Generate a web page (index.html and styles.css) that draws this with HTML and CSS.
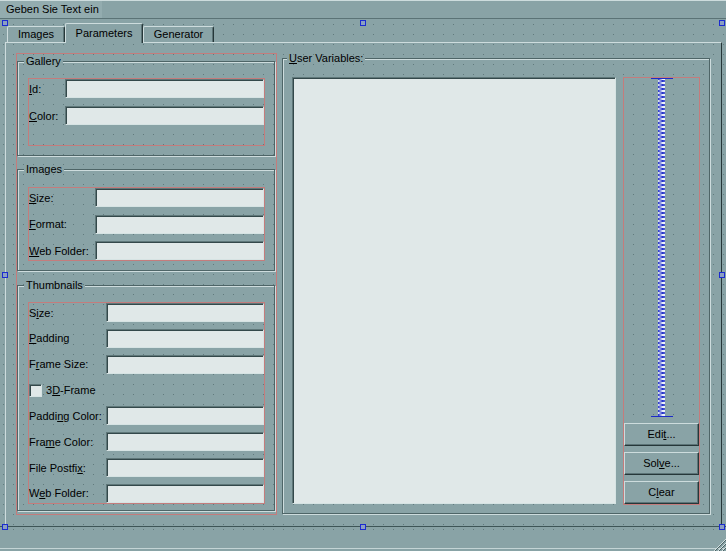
FILE: index.html
```html
<!DOCTYPE html>
<html>
<head>
<meta charset="utf-8">
<title>Form</title>
<link rel="stylesheet" href="styles.css">
</head>
<body>
<div class="topbar"><div class="topbar-label">Geben Sie Text ein</div></div>
<div class="form dotted">
  <div class="tabbar">
    <div class="tab t-images">Images</div>
    <div class="tab t-params sel">Parameters</div>
    <div class="tab t-gen">Generator</div>
  </div>
  <div class="pane">
    <div class="leftcol">
      <div class="group g-gallery">
        <div class="gtitle">Gallery</div>
        <div class="lay lay-gallery">
          <div class="row"><span class="lbl w36"><u>I</u>d:</span><div class="field"></div></div>
          <div class="row"><span class="lbl w36"><u>C</u>olor:</span><div class="field"></div></div>
        </div>
      </div>
      <div class="group g-images">
        <div class="gtitle">Images</div>
        <div class="lay lay-images">
          <div class="row"><span class="lbl w66"><u>S</u>ize:</span><div class="field"></div></div>
          <div class="row"><span class="lbl w66"><u>F</u>ormat:</span><div class="field"></div></div>
          <div class="row"><span class="lbl w66"><u>W</u>eb Folder:</span><div class="field"></div></div>
        </div>
      </div>
      <div class="group g-thumbs">
        <div class="gtitle">Thumbnails</div>
        <div class="lay lay-thumbs">
          <div class="row"><span class="lbl w77">S<u>i</u>ze:</span><div class="field"></div></div>
          <div class="row"><span class="lbl w77"><u>P</u>adding</span><div class="field"></div></div>
          <div class="row"><span class="lbl w77">F<u>r</u>ame Size:</span><div class="field"></div></div>
          <div class="row"><div class="chk"></div><span class="chklbl">3<u>D</u>-Frame</span></div>
          <div class="row"><span class="lbl w77">Paddi<u>n</u>g Color:</span><div class="field"></div></div>
          <div class="row"><span class="lbl w77">Fra<u>m</u>e Color:</span><div class="field"></div></div>
          <div class="row"><span class="lbl w77">File Postfi<u>x</u>:</span><div class="field"></div></div>
          <div class="row"><span class="lbl w77">W<u>e</u>b Folder:</span><div class="field"></div></div>
        </div>
      </div>
    </div>
    <div class="group uv">
      <div class="gtitle uvtitle"><u>U</u>ser Variables:</div>
      <div class="uvrow">
        <div class="listbox"></div>
        <div class="btncol">
          <div class="spacer">
            <div class="sp-cap"></div>
            <svg class="spring" xmlns="http://www.w3.org/2000/svg">
              <defs>
                <pattern id="coil" width="7" height="4" patternUnits="userSpaceOnUse">
                  <rect width="7" height="4" fill="#eef2fa"/>
                  <path d="M0 0.5 L7 2 L0 3.5" fill="none" stroke="#1c2bc8" stroke-width="1"/>
                </pattern>
              </defs>
              <rect width="100%" height="100%" fill="url(#coil)"/>
            </svg>
            <div class="sp-cap"></div>
          </div>
          <div class="btn">Edi<u>t</u>...</div>
          <div class="btn">Sol<u>v</u>e...</div>
          <div class="btn">C<u>l</u>ear</div>
        </div>
      </div>
    </div>
  </div>
</div>
<div class="bottombar"><div class="bdots"></div></div>

<div class="handle h-tl"></div>
<div class="handle h-tc"></div>
<div class="handle h-tr"></div>
<div class="handle h-ml"></div>
<div class="handle h-mr"></div>
<div class="handle h-bl"></div>
<div class="handle h-bc"></div>
<div class="handle h-br"></div>

<svg class="grip" width="13" height="13" viewBox="0 0 13 13" xmlns="http://www.w3.org/2000/svg">
  <g stroke-width="1">
    <line x1="1" y1="13" x2="13" y2="1" stroke="#d3e1e2"/>
    <line x1="2" y1="13" x2="13" y2="2" stroke="#4a6163"/>
    <line x1="5" y1="13" x2="13" y2="5" stroke="#d3e1e2"/>
    <line x1="6" y1="13" x2="13" y2="6" stroke="#4a6163"/>
    <line x1="9" y1="13" x2="13" y2="9" stroke="#d3e1e2"/>
    <line x1="10" y1="13" x2="13" y2="10" stroke="#4a6163"/>
  </g>
</svg>
</body>
</html>
```

FILE: styles.css
```css
:root {
  --bg: #89a3a6;
  --dot: #617a7d;
  --dark: #4e6567;
  --darker: #263739;
  --mid: #5c7477;
  --light: #cddcdd;
  --field: #e0e8e8;
  --red: #c47c7c;
}

html, body {
  margin: 0;
  padding: 0;
}

body {
  width: 726px;
  height: 551px;
  overflow: hidden;
  position: relative;
  background: var(--bg);
  font-family: "Liberation Sans", Arial, sans-serif;
  font-size: 11px;
  color: #000;
}

u {
  text-decoration: underline;
  text-underline-offset: 1px;
}

.dotted,
.gtitle {
  background-color: var(--bg);
  background-image: conic-gradient(at 1px 1px, transparent 75%, var(--dot) 0);
  background-size: 10px 10px;
  background-position: 3px 4px;
  background-attachment: fixed;
}

/* top strip */
.topbar {
  height: 17px;
  border-top: 1px solid var(--light);
  border-bottom: 1px solid #5b7376;
  display: flex;
}

.topbar-label {
  width: 90px;
  padding: 0 6px;
  height: 17px;
  line-height: 17px;
  background: #93acaf;
  white-space: nowrap;
}

/* form */
.form {
  padding: 4px 4px 0 5px;
}

.tabbar {
  height: 19px;
  padding-left: 2px;
  display: flex;
  align-items: flex-end;
}

.tab {
  box-sizing: border-box;
  height: 16px;
  line-height: 15px;
  text-align: center;
  background: var(--bg);
  border-top: 1px solid var(--light);
  border-left: 1px solid var(--light);
  border-right: 1px solid var(--darker);
  box-shadow: inset -1px 0 0 var(--mid);
  border-radius: 2px 2px 0 0;
  white-space: nowrap;
}

.t-images { width: 58px; }
.t-params { width: 78px; }
.t-gen { width: 71px; }

.tab.sel {
  height: 20px;
  line-height: 19px;
  margin-bottom: -1px;
  position: relative;
  z-index: 1;
}

.pane {
  box-sizing: border-box;
  height: 484px;
  border-top: 1px solid var(--light);
  border-left: 1px solid var(--light);
  border-right: 1px solid var(--darker);
  padding: 10px 0 0 10px;
  display: flex;
  align-items: flex-start;
  gap: 5px;
}

/* left column */
.leftcol {
  box-sizing: border-box;
  width: 261px;
  height: 462px;
  border: 1px solid var(--red);
  display: flex;
  flex-direction: column;
}

.group {
  box-sizing: border-box;
  border: 1px solid var(--dark);
  box-shadow: inset 1px 1px 0 var(--light), 1px 1px 0 var(--light);
}

.leftcol .group {
  width: 258px;
  flex: none;
}

.g-gallery { margin-top: 7px; height: 95px; }
.g-images { margin-top: 13px; height: 102px; }
.g-thumbs { margin-top: 14px; height: 226px; }

.gtitle {
  width: max-content;
  height: 13px;
  line-height: 13px;
  margin: -7px 0 0 6px;
  padding: 0 2px;
  white-space: nowrap;
}

.lay {
  box-sizing: border-box;
  width: 237px;
  margin-left: 10px;
  border: 1px solid var(--red);
  display: flex;
  flex-direction: column;
}

.lay-gallery { margin-top: 10px; height: 68px; gap: 8px; }
.lay-images { margin-top: 11px; height: 74px; justify-content: space-between; }
.lay-thumbs { margin-top: 10px; height: 202px; justify-content: space-between; }

.row {
  height: 19px;
  display: flex;
  align-items: center;
  flex: none;
}

.lbl {
  flex: none;
  white-space: nowrap;
}

.w36 { width: 36px; }
.w66 { width: 66px; }
.w77 { width: 77px; }

.field,
.chk,
.listbox {
  box-sizing: border-box;
  background: var(--field);
  border: 1px solid;
  border-color: #5f7779 #d6e3e3 #d6e3e3 #5f7779;
  box-shadow: inset 1px 1px 0 #33484a;
}

.field {
  flex: 1;
  height: 19px;
}

.chk {
  width: 13px;
  height: 13px;
  flex: none;
}

.chklbl {
  margin-left: 4px;
  white-space: nowrap;
}

/* right group */
.uv {
  width: 428px;
  height: 456px;
  margin-top: 5px;
  padding-left: 9px;
}

.uvtitle {
  margin-left: -5px;
}

.uvrow {
  margin-top: 12px;
  display: flex;
  align-items: flex-start;
  gap: 7px;
}

.listbox {
  width: 324px;
  height: 427px;
  flex: none;
}

.btncol {
  box-sizing: border-box;
  width: 77px;
  height: 428px;
  flex: none;
  border: 1px solid var(--red);
  display: flex;
  flex-direction: column;
}

.spacer {
  flex: 1 1 0;
  min-height: 0;
  display: flex;
  flex-direction: column;
  align-items: center;
}

.sp-cap {
  width: 22px;
  height: 1px;
  background: #1c2bc8;
  flex: none;
}

.spring {
  display: block;
  width: 7px;
  flex: 1 1 0;
  min-height: 0;
}

.btn {
  box-sizing: border-box;
  height: 23px;
  margin-top: 6px;
  flex: none;
  background: var(--bg);
  border-top: 1px solid var(--light);
  border-left: 1px solid var(--light);
  border-right: 1px solid var(--darker);
  border-bottom: 1px solid var(--darker);
  box-shadow: inset -1px -1px 0 var(--mid);
  text-align: center;
  line-height: 21px;
  white-space: nowrap;
}

/* bottom strip */
.bottombar {
  height: 21px;
  border-top: 1px solid #3e5557;
  border-bottom: 1px solid #c3d4d5;
  margin-bottom: 2px;
}

.bdots {
  height: 5px;
  background-image: conic-gradient(at 1px 1px, transparent 75%, var(--dot) 0);
  background-size: 10px 10px;
  background-position: 3px 2px;
}

/* selection handles (overlay) */
.handle {
  position: absolute;
  width: 6px;
  height: 6px;
  box-sizing: border-box;
  border: 1px solid #1b2bd0;
  background: #8b9fc2;
}

.h-tl { left: 2px; top: 20px; }
.h-tc { left: 360px; top: 20px; }
.h-tr { left: 719px; top: 20px; }
.h-ml { left: 2px; top: 272px; }
.h-mr { left: 719px; top: 272px; }
.h-bl { left: 2px; top: 524px; }
.h-bc { left: 360px; top: 524px; }
.h-br { left: 719px; top: 524px; }

.grip {
  position: absolute;
  right: 0;
  bottom: 0;
  display: block;
}
```
